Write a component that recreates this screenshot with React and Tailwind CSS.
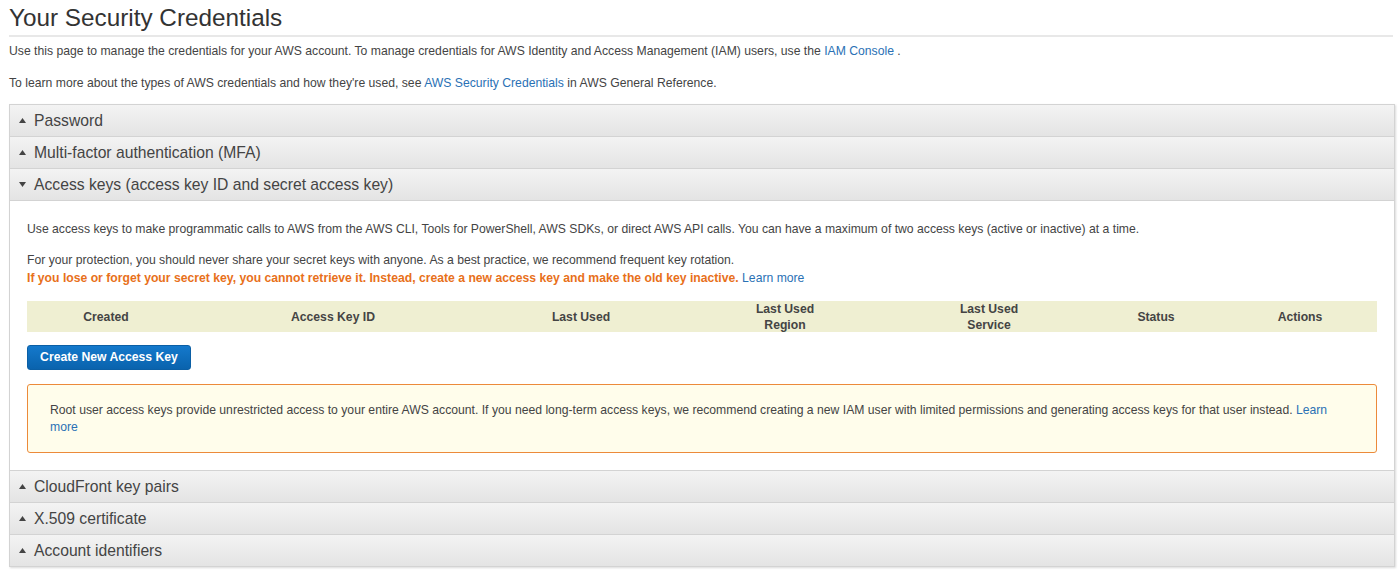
import React from "react";

const Caret = ({ open }) => (
  <svg width="7" height="5" viewBox="0 0 7 5" className="shrink-0">
    {open ? (
      <polygon points="0,0 7,0 3.5,5" fill="#444" />
    ) : (
      <polygon points="0,5 7,5 3.5,0" fill="#444" />
    )}
  </svg>
);

const SectionHeader = ({ title, open = false, first = false }) => (
  <div
    className={`h-[31px] flex items-center pl-[9px] bg-gradient-to-b from-[#f3f3f3] to-[#e4e4e4] ${
      first ? "" : "border-t border-[#d3d3d3] h-[32px]"
    }`}
  >
    <Caret open={open} />
    <span className="ml-[8px] text-[15.7px] text-[#444]">{title}</span>
  </div>
);

const columns = [
  "Created",
  "Access Key ID",
  "Last Used",
  ["Last Used", "Region"],
  ["Last Used", "Service"],
  "Status",
  "Actions",
];

export default function App() {
  return (
    <div
      className="w-[1400px] h-[572px] bg-white overflow-hidden text-[#444]"
      style={{ fontFamily: '"Liberation Sans", Arial, sans-serif' }}
    >
      <div className="mx-[9px] pt-[4px]">
        {/* Title */}
        <h1 className="text-[24.3px] leading-[28px] text-[#333] pb-[3px] border-b-2 border-[#e8e8e8] mr-[-2px]">
          Your Security Credentials
        </h1>

        <p className="mt-[6px] text-[12.2px] leading-[16px]">
          Use this page to manage the credentials for your AWS account. To manage
          credentials for AWS Identity and Access Management (IAM) users, use the{" "}
          <a className="text-[#2a71b5]">IAM Console</a> .
        </p>
        <p className="mt-[16px] text-[12.2px] leading-[16px]">
          To learn more about the types of AWS credentials and how they're used,
          see <a className="text-[#2a71b5]">AWS Security Credentials</a> in AWS
          General Reference.
        </p>

        {/* Accordion */}
        <div className="mt-[13px] w-[1386px] border border-[#d3d3d3] shadow-[1px_1px_2px_rgba(0,0,0,0.15)]">
          <SectionHeader title="Password" first />
          <SectionHeader title="Multi-factor authentication (MFA)" />
          <SectionHeader
            title="Access keys (access key ID and secret access key)"
            open
          />

          {/* Access keys content */}
          <div className="bg-white border-t border-[#d3d3d3] px-[17px] pt-[19px] pb-[17px] text-[12.2px]">
            <p className="leading-[18px]">
              Use access keys to make programmatic calls to AWS from the AWS CLI,
              Tools for PowerShell, AWS SDKs, or direct AWS API calls. You can have
              a maximum of two access keys (active or inactive) at a time.
            </p>
            <p className="mt-[13px] leading-[18px]">
              For your protection, you should never share your secret keys with
              anyone. As a best practice, we recommend frequent key rotation.
            </p>
            <p className="leading-[18px]">
              <span className="font-bold text-[#e8701a]">
                If you lose or forget your secret key, you cannot retrieve it.
                Instead, create a new access key and make the old key inactive.
              </span>{" "}
              <a className="text-[#2a71b5]">Learn more</a>
            </p>

            {/* Table header */}
            <div className="mt-[14px] h-[31px] bg-[#efefd2] grid grid-cols-[158px_296px_200px_208px_200px_134px_1fr] items-center font-bold text-[#444] leading-[16px]">
              {columns.map((c, i) => (
                <div key={i} className="text-center">
                  {Array.isArray(c) ? (
                    <>
                      {c[0]}
                      <br />
                      {c[1]}
                    </>
                  ) : (
                    c
                  )}
                </div>
              ))}
            </div>

            <button className="mt-[13px] h-[25px] w-[164px] rounded-[3px] bg-gradient-to-b from-[#1479cc] to-[#0a63ad] border border-[#0b5fa5] text-white font-bold text-[12.2px]">
              Create New Access Key
            </button>

            {/* Warning */}
            <div className="mt-[14px] border border-[#ec8a3a] rounded-[3px] bg-[#fffdeb] pl-[22px] pr-[44px] pt-[17px] pb-[16px] leading-[17px]">
              Root user access keys provide unrestricted access to your entire AWS
              account. If you need long-term access keys, we recommend creating a
              new IAM user with limited permissions and generating access keys for
              that user instead.{" "}
              <a className="text-[#2a71b5]">Learn more</a>
            </div>
          </div>

          <SectionHeader title="CloudFront key pairs" />
          <SectionHeader title="X.509 certificate" />
          <SectionHeader title="Account identifiers" />
        </div>
      </div>
    </div>
  );
}
